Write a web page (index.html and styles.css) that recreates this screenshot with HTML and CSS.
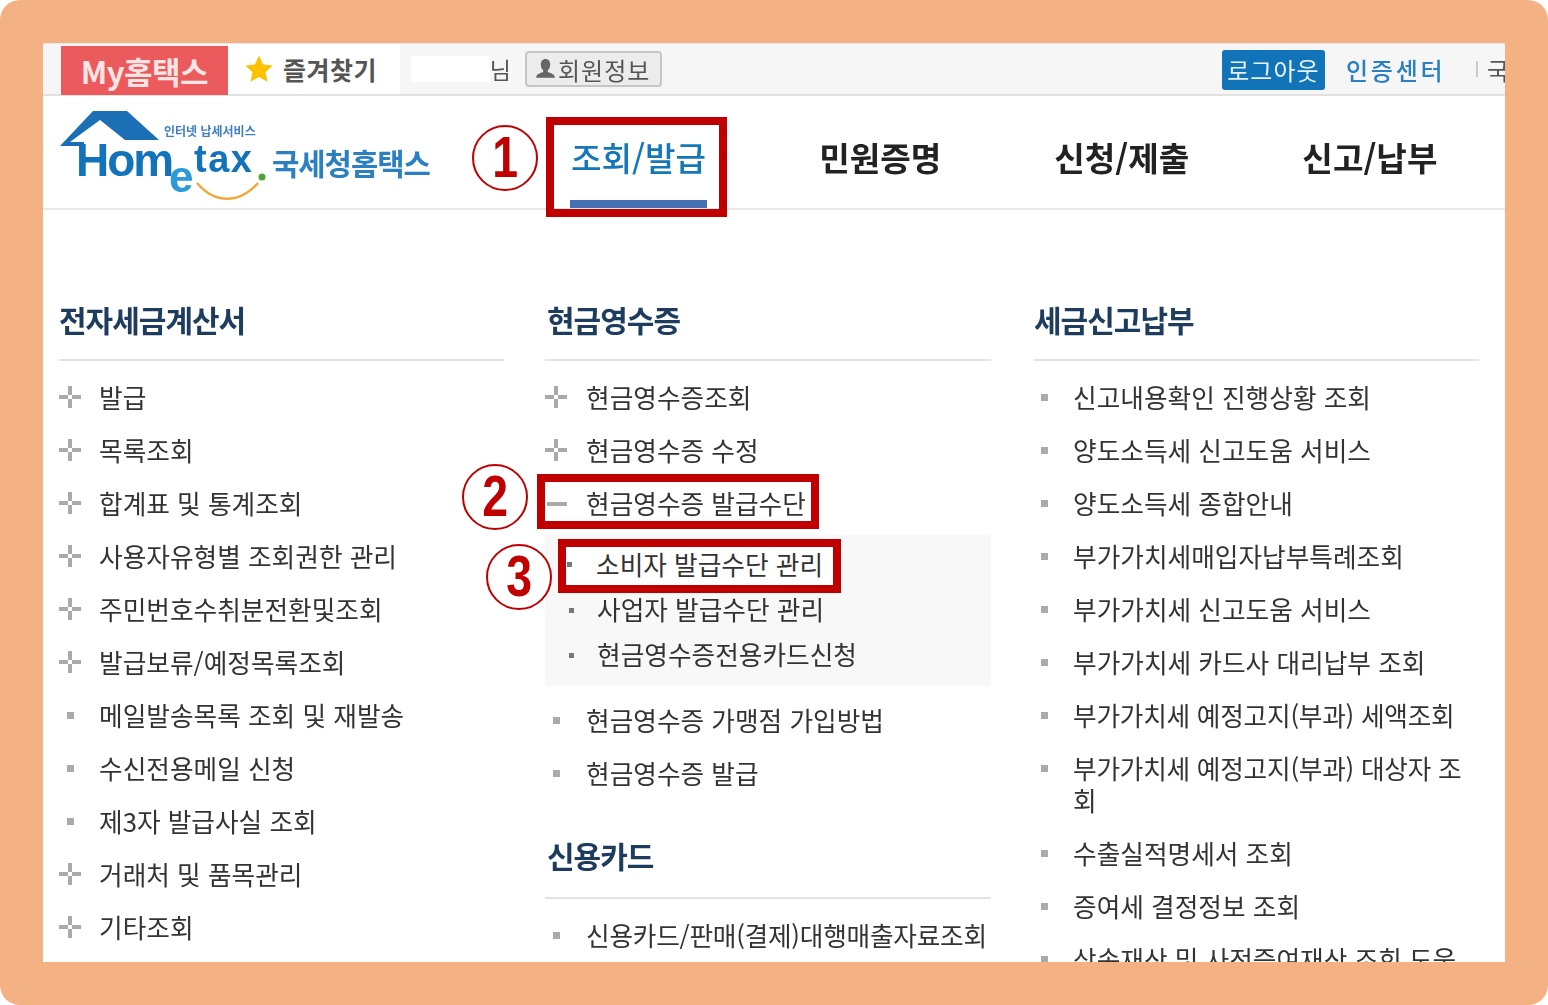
FILE: index.html
```html
<!DOCTYPE html>
<html lang="ko">
<head>
  <meta charset="UTF-8">
  <meta name="viewport" content="width=device-width, initial-scale=1.0">
  <title>국세청 홈택스</title>
  <link rel="stylesheet" href="styles.css">
</head>
<body>
  <div class="frame">
    <div class="sheet">

      <div class="topbar">
        <a class="tab-my">My홈택스</a>
        <a class="tab-fav">
          <svg class="star" viewBox="0 0 24 24"><path d="M12 0.5l3.500 7.600 8.200 1-6.100 5.600 1.700 8.300L12 18.800 4.700 23l1.700-8.300L0.300 9.100l8.200-1z"/></svg>
          즐겨찾기
        </a>
        <div class="user-name"><span class="name-mask"></span>님</div>
        <a class="btn-member">
          <svg class="person" viewBox="0 0 20 22"><path d="M10 1c3 0 4.500 2.300 4.500 5.200 0 2.500-1 4.600-2.300 5.600v1.600c2.500 1 6.800 2 6.800 5.600H1c0-3.600 4.300-4.600 6.800-5.600v-1.600C6.500 10.800 5.500 8.700 5.500 6.200 5.500 3.300 7 1 10 1z"/></svg>
          회원정보
        </a>
        <div class="topbar-right">
          <a class="btn-logout">로그아웃</a>
          <a class="link-cert">인증센터</a>
          <span class="divider"></span>
          <span class="link-lang">국</span>
        </div>
      </div>

      <div class="header">
        <svg class="logo" viewBox="0 0 372 96">
          <path class="logo-roof" d="M1 37L34 2h34l32 29H66L41 11 11 33h14v4z"/>
          <text class="logo-sub" x="105" y="27">인터넷 납세서비스</text>
          <text class="logo-word" x="17" y="67">Hom</text>
          <text class="logo-e" x="110" y="83">e</text>
          <text class="logo-tax" x="135" y="63">tax</text>
          <circle class="logo-dot" cx="203" cy="68" r="3.500"/>
          <path class="logo-smile" d="M138 74c18 21 42 21 61 0"/>
          <text class="logo-kr" x="213" y="66">국세청홈택스</text>
        </svg>
        <nav class="gnb">
          <a class="gnb-item active">조회/발급</a>
          <a class="gnb-item">민원증명</a>
          <a class="gnb-item">신청/제출</a>
          <a class="gnb-item">신고/납부</a>
        </nav>
      </div>

      <div class="menu-grid">
        <div class="menu-col">
          <h3 class="menu-title">전자세금계산서</h3>
          <ul class="menu-list">
            <li class="plus">발급</li>
            <li class="plus">목록조회</li>
            <li class="plus">합계표 및 통계조회</li>
            <li class="plus">사용자유형별 조회권한 관리</li>
            <li class="plus">주민번호수취분전환및조회</li>
            <li class="plus">발급보류/예정목록조회</li>
            <li class="dot">메일발송목록 조회 및 재발송</li>
            <li class="dot">수신전용메일 신청</li>
            <li class="dot">제3자 발급사실 조회</li>
            <li class="plus">거래처 및 품목관리</li>
            <li class="plus">기타조회</li>
          </ul>
        </div>

        <div class="menu-col mid">
          <h3 class="menu-title">현금영수증</h3>
          <ul class="menu-list">
            <li class="plus">현금영수증조회</li>
            <li class="plus">현금영수증 수정</li>
            <li class="minus">현금영수증 발급수단</li>
          </ul>
          <ul class="sub-list">
            <li>소비자 발급수단 관리</li>
            <li>사업자 발급수단 관리</li>
            <li>현금영수증전용카드신청</li>
          </ul>
          <ul class="menu-list after-sub">
            <li class="dot">현금영수증 가맹점 가입방법</li>
            <li class="dot">현금영수증 발급</li>
          </ul>
          <h3 class="menu-title second">신용카드</h3>
          <ul class="menu-list">
            <li class="dot tight">신용카드/판매(결제)대행매출자료조회</li>
          </ul>
        </div>

        <div class="menu-col last">
          <h3 class="menu-title">세금신고납부</h3>
          <ul class="menu-list">
            <li class="dot">신고내용확인 진행상황 조회</li>
            <li class="dot">양도소득세 신고도움 서비스</li>
            <li class="dot">양도소득세 종합안내</li>
            <li class="dot">부가가치세매입자납부특례조회</li>
            <li class="dot">부가가치세 신고도움 서비스</li>
            <li class="dot">부가가치세 카드사 대리납부 조회</li>
            <li class="dot tight">부가가치세 예정고지(부과) 세액조회</li>
            <li class="dot tight">부가가치세 예정고지(부과) 대상자 조회</li>
            <li class="dot">수출실적명세서 조회</li>
            <li class="dot">증여세 결정정보 조회</li>
            <li class="dot">상속재산 및 사전증여재산 조회 도움</li>
          </ul>
        </div>
      </div>

      <!-- 빨간 표시 -->
      <div class="mark mark-1"></div>
      <div class="mark mark-2"></div>
      <div class="mark mark-3"><span class="mark-bullet"></span>소비자 발급수단 관리</div>
      <div class="num num-1"><span>1</span></div>
      <div class="num num-2"><span>2</span></div>
      <div class="num num-3"><span>3</span></div>
    </div>
  </div>
</body>
</html>
```

FILE: styles.css
```css
* {
  box-sizing: border-box;
}

html, body {
  margin: 0;
  padding: 0;
  background-color: #fff;
  font-family: "Noto Sans CJK KR", "Noto Sans", sans-serif;
}

ul {
  list-style: none;
  margin: 0;
  padding: 0;
}

.frame {
  width: 1548px;
  height: 1005px;
  padding: 43px;
  background-color: #f4b183;
  border-radius: 20px;
  overflow: hidden;
}

.sheet {
  position: relative;
  width: 1462px;
  height: 919px;
  background-color: #fff;
  overflow: hidden;
}

/* the source is an upscaled capture, so it is a little soft */
.topbar, .header, .menu-grid {
  filter: blur(0.4px);
}

/* top bar */
.topbar {
  display: flex;
  align-items: center;
  height: 53px;
  padding-left: 18px;
  background-color: #f6f6f6;
  border-top: 1px solid #e6e6e6;
  border-bottom: 2px solid #e2e2e2;
}

.tab-my {
  display: flex;
  align-items: center;
  justify-content: center;
  width: 167px;
  height: 49px;
  margin-top: 3px;
  background-color: #eb5a5c;
  color: #fbe4e4;
  font-size: 31px;
  font-weight: 700;
  letter-spacing: -0.500px;
  white-space: nowrap;
}

.tab-fav {
  display: flex;
  align-items: center;
  gap: 10px;
  width: 172px;
  height: 50px;
  padding-left: 17px;
  background-color: #fff;
  color: #555;
  font-size: 25px;
  font-weight: 700;
  letter-spacing: 0.500px;
}

.star {
  width: 28px;
  height: 28px;
  fill: #fcc200;
}

.user-name {
  position: relative;
  width: 100px;
  margin-left: 11px;
  text-align: right;
  color: #555;
  font-size: 23px;
}

.name-mask {
  position: absolute;
  left: 0;
  top: 4px;
  width: 79px;
  height: 26px;
  background-color: #fff;
}

.btn-member {
  display: flex;
  align-items: center;
  gap: 2px;
  width: 137px;
  height: 36px;
  margin-left: 14px;
  padding-left: 8px;
  background-color: #ececec;
  border: 2px solid #c6c6c6;
  border-radius: 4px;
  color: #555;
  font-size: 24px;
  letter-spacing: 1px;
  white-space: nowrap;
}

.person {
  width: 21px;
  height: 23px;
  fill: #666;
}

.topbar-right {
  display: flex;
  align-items: center;
  margin-left: auto;
  margin-right: -4px;
}

.btn-logout {
  width: 103px;
  height: 40px;
  margin-top: 2px;
  background-color: #1173b8;
  border-radius: 3px;
  color: #e6f1f8;
  font-size: 24px;
  line-height: 40px;
  letter-spacing: 1px;
  text-align: center;
  white-space: nowrap;
}

.link-cert {
  width: 98px;
  margin-left: 21px;
  color: #2a7fc4;
  font-size: 24px;
  font-weight: 500;
  letter-spacing: 2.800px;
  white-space: nowrap;
}

.divider {
  width: 2px;
  height: 16px;
  margin-left: 32px;
  background-color: #ccc;
}

.link-lang {
  margin-left: 9px;
  color: #555;
  font-size: 24px;
}

/* header */
.header {
  display: flex;
  height: 114px;
  border-bottom: 2px solid #e8e8e8;
}

.logo {
  flex: none;
  width: 372px;
  height: 96px;
  margin-left: 16px;
  margin-top: 13px;
}

.logo-roof {
  fill: #1a6fb5;
}

.logo-sub {
  fill: #3d7fc0;
  font-size: 12px;
  font-weight: 700;
}

.logo-word, .logo-e, .logo-tax {
  fill: #1273ba;
  font-family: "Liberation Sans", sans-serif;
  font-weight: 700;
}

.logo-word {
  font-size: 46px;
  letter-spacing: -2px;
}

.logo-e {
  fill: #2b9ad6;
  font-size: 44px;
}

.logo-tax {
  font-size: 38px;
  letter-spacing: 1.500px;
}

.logo-dot {
  fill: #4fa53a;
}

.logo-smile {
  fill: none;
  stroke: #f3a73b;
  stroke-width: 2.500;
}

.logo-kr {
  fill: #2a80c0;
  font-size: 29.700px;
  font-weight: 700;
  letter-spacing: -1px;
}

.gnb {
  display: flex;
  gap: 111px;
  margin-left: 139px;
}

.gnb-item {
  display: flex;
  align-items: center;
  height: 112px;
  padding: 17px 1px 0;
  color: #222;
  font-size: 33.200px;
  font-weight: 700;
  border-bottom: 8px solid transparent;
  white-space: nowrap;
}

.gnb-item.active {
  color: #1478b8;
  font-weight: 500;
  border-bottom-color: #4472b4;
}

/* menus */
.menu-grid {
  display: grid;
  grid-template-columns: 445px 446px 445px;
  column-gap: 41px;
  padding-left: 16px;
  padding-top: 70px;
}

.menu-col.last {
  margin-left: 2px;
  margin-right: -2px;
}

.menu-title {
  height: 81px;
  margin: 0 0 10px;
  border-bottom: 2px solid #e2e2e2;
  color: #1d3c5e;
  font-size: 30px;
  font-weight: 700;
  line-height: 78px;
  letter-spacing: -1px;
}

.mid .menu-title {
  padding-left: 2px;
}

.menu-title.second {
  margin-top: 18px;
  line-height: 75px;
}

.menu-list li {
  position: relative;
  padding: 9.500px 0 11.500px 40px;
  color: #333;
  font-size: 25.700px;
  line-height: 32px;
}

.mid .menu-list li {
  padding-left: 41px;
  white-space: nowrap;
}

.last .menu-list li {
  padding-left: 39px;
}

.menu-list li.tight {
  letter-spacing: -0.250px;
}

.menu-list .plus::before {
  content: "";
  position: absolute;
  left: 0;
  top: 15px;
  width: 22px;
  height: 22px;
  background:
    linear-gradient(#aaa, #aaa) 0 9px / 9px 4px no-repeat,
    linear-gradient(#aaa, #aaa) 13px 9px / 9px 4px no-repeat,
    linear-gradient(#aaa, #aaa) 9px 0 / 4px 9px no-repeat,
    linear-gradient(#aaa, #aaa) 9px 13px / 4px 9px no-repeat;
}

.menu-list .dot::before {
  content: "";
  position: absolute;
  left: 8px;
  top: 23px;
  width: 7px;
  height: 7px;
  background-color: #aaa;
}

.last .menu-list .dot::before {
  left: 7px;
}

.menu-list .minus::before {
  content: "";
  position: absolute;
  left: 2px;
  top: 25px;
  width: 20px;
  height: 4px;
  background-color: #aaa;
}

.sub-list {
  margin-top: 5px;
  padding: 8px 0;
  background-color: #f8f8f8;
}

.sub-list li {
  position: relative;
  height: 45px;
  padding-left: 52px;
  color: #333;
  font-size: 25.700px;
  line-height: 42px;
}

.sub-list li::before {
  content: "";
  position: absolute;
  left: 24px;
  top: 20px;
  width: 5px;
  height: 5px;
  background-color: #777;
}

.menu-list.after-sub {
  margin-top: 8px;
}

/* red annotations */
.mark {
  position: absolute;
  border: 8px solid #c00000;
}

.mark-1 {
  left: 503px;
  top: 74px;
  width: 181px;
  height: 100px;
}

.mark-2 {
  left: 494px;
  top: 431px;
  width: 282px;
  height: 55px;
}

.mark-3 {
  left: 515px;
  top: 496px;
  width: 283px;
  height: 54px;
  padding-left: 30px;
  background-color: #fff;
  color: #333;
  font-size: 25.700px;
  line-height: 34px;
  white-space: nowrap;
}

.mark-bullet {
  position: absolute;
  left: 1px;
  top: 15px;
  width: 5px;
  height: 5px;
  background-color: #777;
}

.num {
  position: absolute;
  width: 66px;
  height: 66px;
  background-color: #fff;
  border: 2px solid #c00000;
  border-radius: 50%;
  color: #c00000;
  font-family: "Liberation Sans", sans-serif;
  font-size: 58px;
  font-weight: 700;
  line-height: 60px;
  text-align: center;
}

.num span {
  display: inline-block;
  transform: scaleX(0.8);
}

.num-1 {
  left: 429px;
  top: 82px;
}

.num-2 {
  left: 419px;
  top: 421px;
}

.num-3 {
  left: 443px;
  top: 501px;
}
```
